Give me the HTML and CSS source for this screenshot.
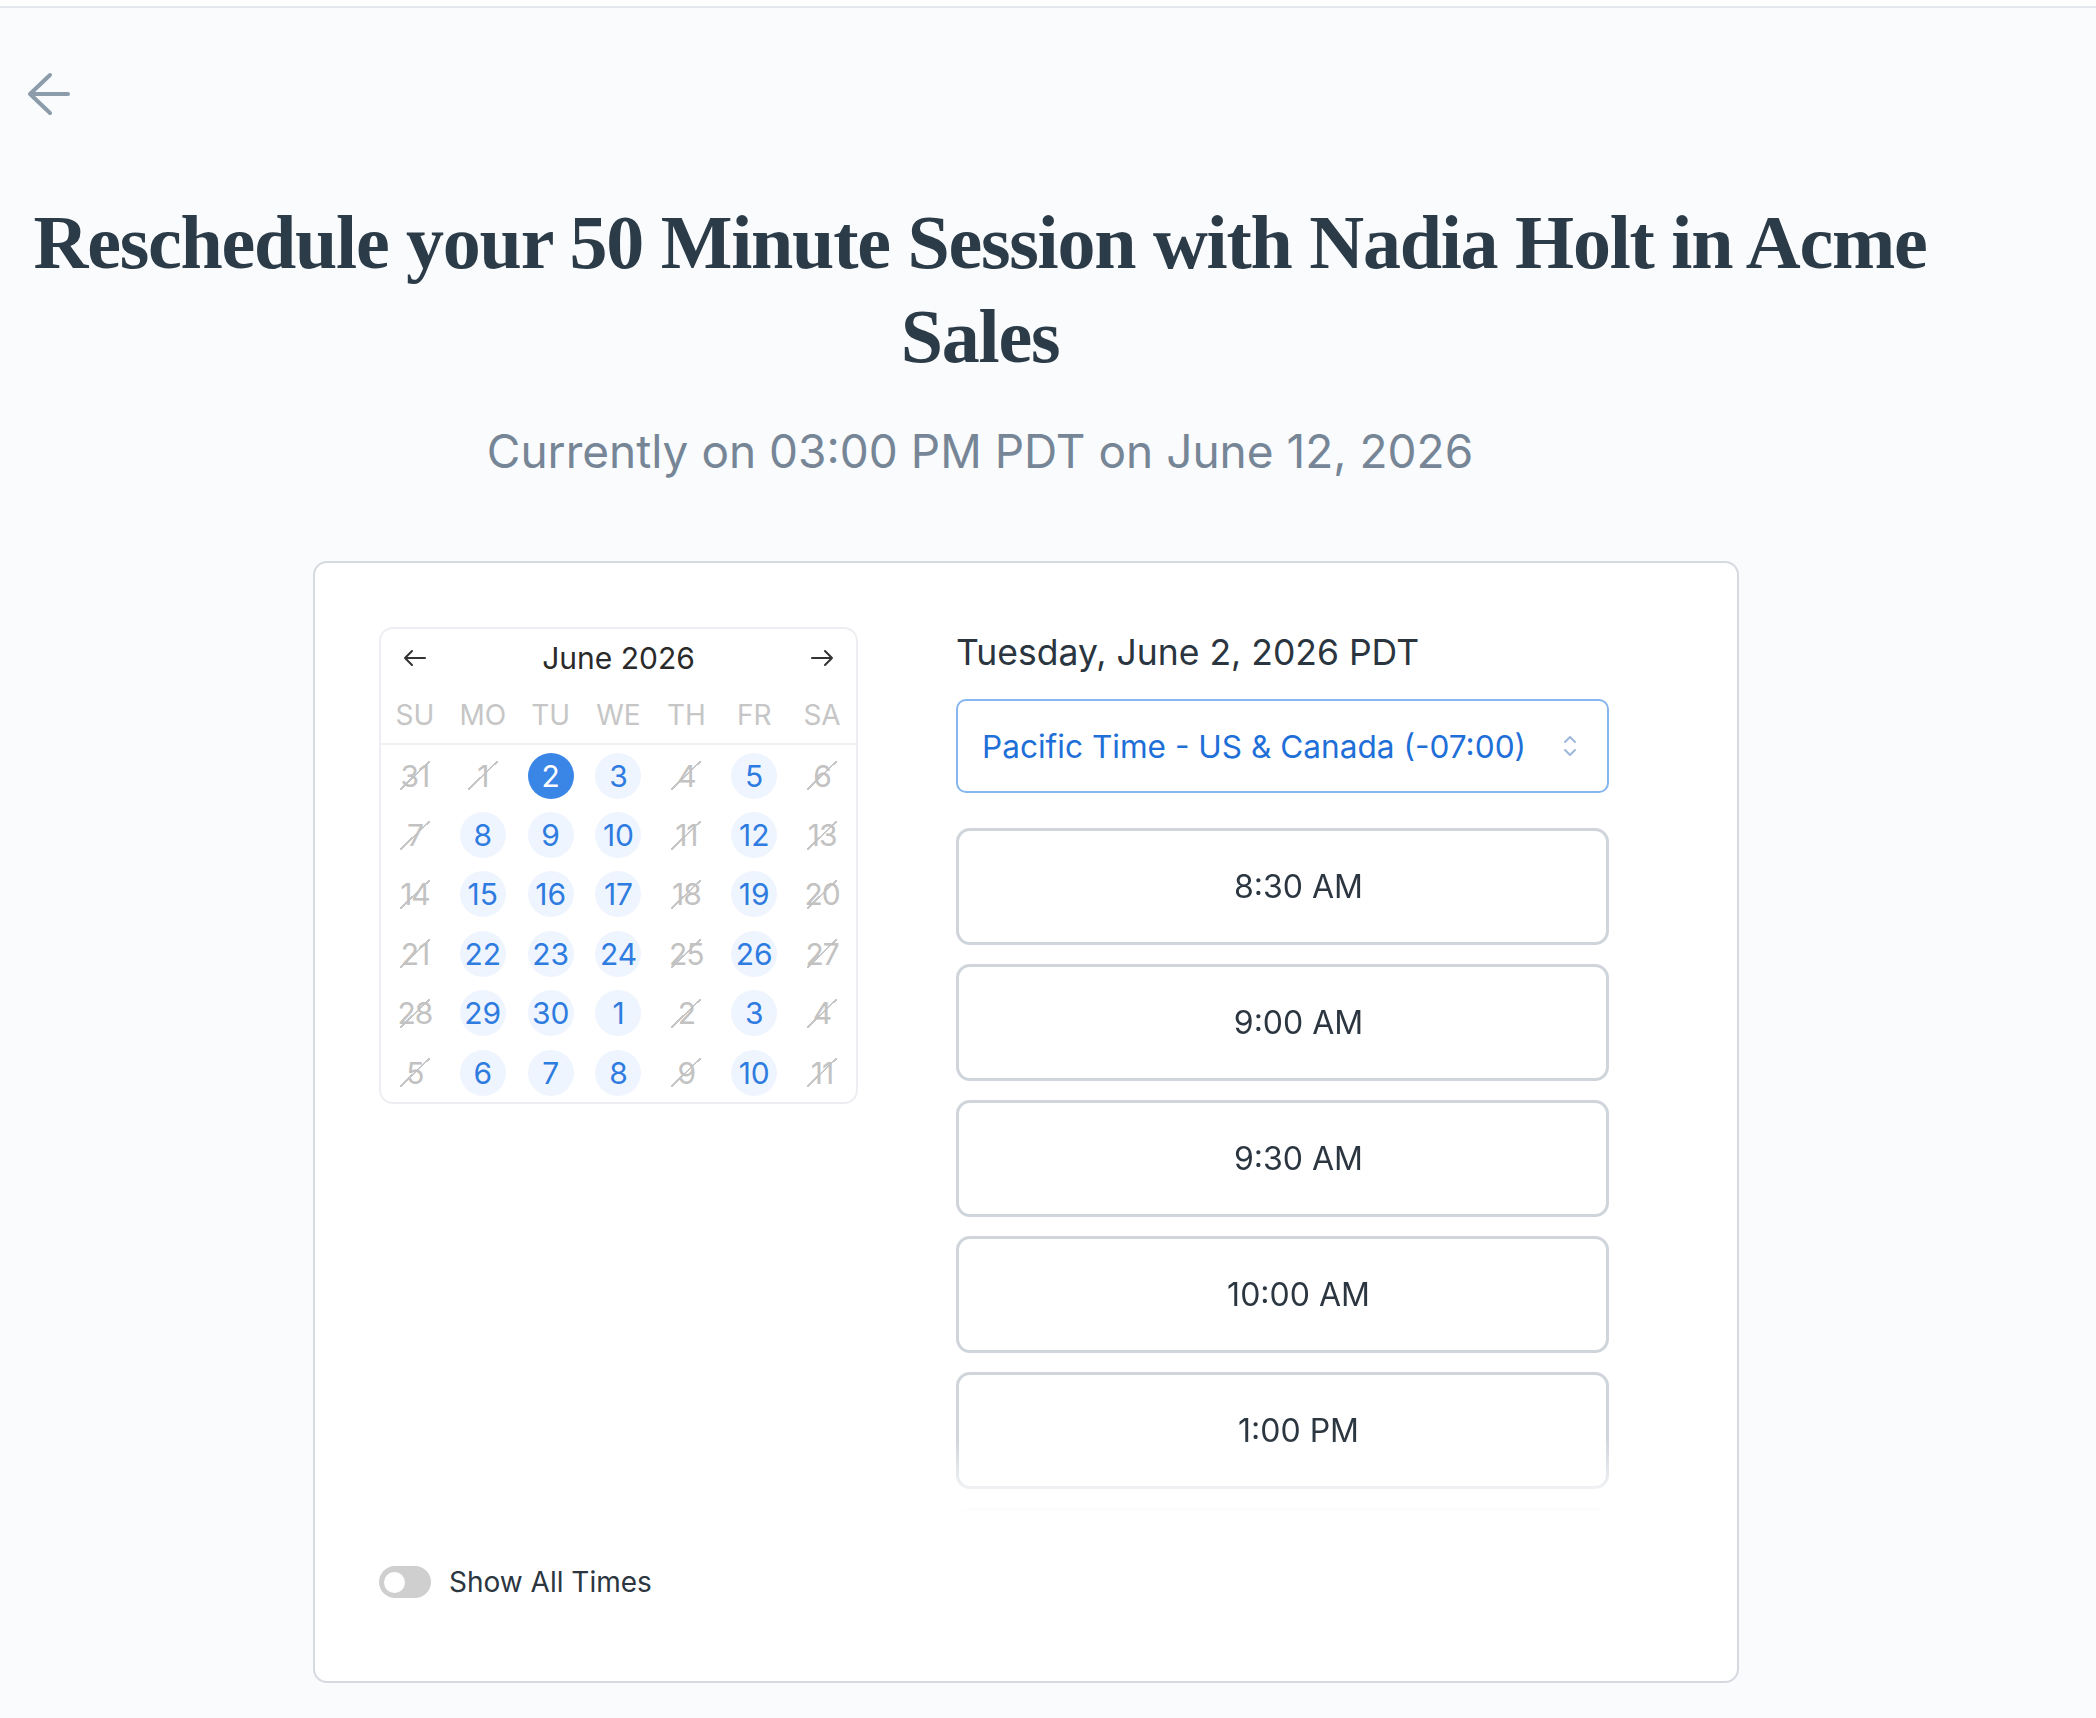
FILE: index.html
```html
<!DOCTYPE html>
<html lang="en">
<head>
<meta charset="utf-8">
<title>Reschedule</title>
<link rel="stylesheet" href="styles.css">
</head>
<body>
<div class="topbar"></div>
<div class="back-row">
  <a class="back" href="#" aria-label="Back">
    <svg width="44" height="44" viewBox="0 0 44 44" fill="none" stroke="#8c9cab" stroke-width="4" stroke-linecap="round" stroke-linejoin="round"><path d="M3 22H41M3 22L23 3M3 22L23 41"/></svg>
  </a>
</div>
<div class="header">
  <h1 class="title">Reschedule your 50 Minute Session with Nadia Holt in Acme Sales</h1>
  <p class="subtitle">Currently on 03:00 PM PDT on June 12, 2026</p>
</div>
<main class="card">
  <div class="top-row">
    <section class="calendar">
      <div class="cal-head">
        <span class="nav"><svg width="24" height="18" viewBox="0 0 24 18" fill="none" stroke="#333" stroke-width="2" stroke-linecap="round" stroke-linejoin="round"><path d="M2 9H22M2 9L9 2M2 9L9 16"/></svg></span>
        <span class="month">June 2026</span>
        <span class="nav"><svg width="24" height="18" viewBox="0 0 24 18" fill="none" stroke="#333" stroke-width="2" stroke-linecap="round" stroke-linejoin="round"><path d="M22 9H2M22 9L15 2M22 9L15 16"/></svg></span>
      </div>
      <div class="weekdays">
        <span>SU</span><span>MO</span><span>TU</span><span>WE</span><span>TH</span><span>FR</span><span>SA</span>
      </div>
      <div class="days">
        <span class="cell"><span class="off">31</span></span>
        <span class="cell"><span class="off">1</span></span>
        <span class="cell"><span class="on sel">2</span></span>
        <span class="cell"><span class="on">3</span></span>
        <span class="cell"><span class="off">4</span></span>
        <span class="cell"><span class="on">5</span></span>
        <span class="cell"><span class="off">6</span></span>

        <span class="cell"><span class="off">7</span></span>
        <span class="cell"><span class="on">8</span></span>
        <span class="cell"><span class="on">9</span></span>
        <span class="cell"><span class="on">10</span></span>
        <span class="cell"><span class="off">11</span></span>
        <span class="cell"><span class="on">12</span></span>
        <span class="cell"><span class="off">13</span></span>

        <span class="cell"><span class="off">14</span></span>
        <span class="cell"><span class="on">15</span></span>
        <span class="cell"><span class="on">16</span></span>
        <span class="cell"><span class="on">17</span></span>
        <span class="cell"><span class="off">18</span></span>
        <span class="cell"><span class="on">19</span></span>
        <span class="cell"><span class="off">20</span></span>

        <span class="cell"><span class="off">21</span></span>
        <span class="cell"><span class="on">22</span></span>
        <span class="cell"><span class="on">23</span></span>
        <span class="cell"><span class="on">24</span></span>
        <span class="cell"><span class="off">25</span></span>
        <span class="cell"><span class="on">26</span></span>
        <span class="cell"><span class="off">27</span></span>

        <span class="cell"><span class="off">28</span></span>
        <span class="cell"><span class="on">29</span></span>
        <span class="cell"><span class="on">30</span></span>
        <span class="cell"><span class="on">1</span></span>
        <span class="cell"><span class="off">2</span></span>
        <span class="cell"><span class="on">3</span></span>
        <span class="cell"><span class="off">4</span></span>

        <span class="cell"><span class="off">5</span></span>
        <span class="cell"><span class="on">6</span></span>
        <span class="cell"><span class="on">7</span></span>
        <span class="cell"><span class="on">8</span></span>
        <span class="cell"><span class="off">9</span></span>
        <span class="cell"><span class="on">10</span></span>
        <span class="cell"><span class="off">11</span></span>
      </div>
    </section>
    <section class="times">
      <div class="date">Tuesday, June 2, 2026 PDT</div>
      <div class="tz">
        <span>Pacific Time - US &amp; Canada (-07:00)</span>
        <svg width="16" height="26" viewBox="0 0 16 26" fill="none" stroke="#9db8db" stroke-width="2" stroke-linecap="round" stroke-linejoin="round"><path d="M3 9L8 4L13 9M3 17L8 22L13 17"/></svg>
      </div>
      <div class="slots">
        <button class="slot">8:30 AM</button>
        <button class="slot">9:00 AM</button>
        <button class="slot">9:30 AM</button>
        <button class="slot">10:00 AM</button>
        <button class="slot">1:00 PM</button>
        <button class="slot" aria-label="1:30 PM"></button>
      </div>
    </section>
  </div>
  <label class="toggle-row">
    <span class="toggle"><span class="knob"></span></span>
    <span class="toggle-label">Show All Times</span>
  </label>
</main>
</body>
</html>
```

FILE: styles.css
```css
* { box-sizing: border-box; }
html, body { margin: 0; padding: 0; }
body {
  background: #f9fbfd;
  font-family: Inter, "Noto Sans", "Liberation Sans", sans-serif;
  color: #2b3640;
  width: 2096px;
  min-height: 1718px;
}
.topbar {
  height: 8px;
  background: #ffffff;
  border-bottom: 2px solid #e4e7eb;
}
.back-row {
  padding-left: 27px;
  margin-top: 64px;
  height: 44px;
}
.back { display: block; width: 44px; height: 44px; }
.back svg { display: block; }
.header {
  margin-left: 24px;
  width: 1912px;
  text-align: center;
}
.title {
  margin: 79px 0 0;
  font-family: "Liberation Serif", "DejaVu Serif", serif;
  font-weight: 700;
  font-size: 76px;
  line-height: 94px;
  letter-spacing: -1.25px;
  color: #2c3b48;
}
.subtitle {
  margin: 39px 0 0;
  font-size: 46px;
  line-height: 58px;
  color: #768696;
  font-weight: 400;
}
.card {
  margin: 81px 0 0 313px;
  width: 1426px;
  background: #ffffff;
  border: 2px solid #d6dae0;
  border-radius: 14px;
  padding: 64px 64px 83px 64px;
}
.top-row {
  display: flex;
  align-items: flex-start;
  gap: 98px;
}
.calendar {
  width: 479px;
  border: 2px solid #eceef1;
  border-radius: 14px;
}
.cal-head {
  display: flex;
  align-items: center;
  height: 57px;
}
.nav {
  width: 68px;
  display: flex;
  justify-content: center;
  align-items: center;
}
.nav svg { display: block; }
.month {
  flex: 1;
  text-align: center;
  font-size: 30px;
  color: #2a2a2a;
}
.weekdays {
  display: grid;
  grid-template-columns: repeat(7, 1fr);
  height: 59px;
  align-items: center;
  border-bottom: 2px solid #eff1f3;
  font-size: 28px;
  color: #c6c6c6;
  text-align: center;
}
.days {
  display: grid;
  grid-template-columns: repeat(7, 1fr);
  grid-auto-rows: 59.4px;
  padding-top: 1px;
}
.cell {
  display: flex;
  align-items: center;
  justify-content: center;
}
.on {
  width: 46px;
  height: 46px;
  border-radius: 50%;
  background: #eff5fe;
  color: #2f7ce0;
  font-size: 30px;
  display: flex;
  align-items: center;
  justify-content: center;
}
.on.sel {
  background: #3a86e7;
  color: #ffffff;
}
.off {
  width: 30px;
  height: 29px;
  font-size: 30px;
  color: #c2c2c2;
  display: flex;
  align-items: center;
  justify-content: center;
  letter-spacing: -1px;
  background: linear-gradient(to bottom right, transparent calc(50% - 1px), #c6c6c6 calc(50% - 1px), #c6c6c6 calc(50% + 0.8px), transparent calc(50% + 0.8px));
}
.times {
  width: 653px;
}
.date {
  font-size: 35.5px;
  line-height: 52px;
  color: #2a3540;
}
.tz {
  margin-top: 20px;
  height: 94px;
  border: 2px solid #86b6ef;
  border-radius: 10px;
  display: flex;
  align-items: center;
  justify-content: space-between;
  padding: 0 29px 0 24px;
  font-size: 31.6px;
  color: #1f6fd8;
}
.tz svg { display: block; }
.slots {
  margin-top: 35px;
  height: 692px;
  overflow: hidden;
  display: flex;
  flex-direction: column;
  gap: 19px;
  -webkit-mask-image: linear-gradient(to bottom, #000 calc(100% - 82px), transparent calc(100% - 6px));
  mask-image: linear-gradient(to bottom, #000 calc(100% - 82px), transparent calc(100% - 6px));
}
.slot {
  flex: none;
  height: 117px;
  width: 100%;
  border: 3px solid #d0d5dc;
  border-radius: 14px;
  background: #ffffff;
  font-family: Inter, "Noto Sans", "Liberation Sans", sans-serif;
  font-size: 32px;
  color: #2b3640;
  padding: 0 0 0 32px;
  text-align: center;
}
.toggle-row {
  margin-top: 46px;
  display: flex;
  align-items: center;
  gap: 18px;
  height: 32px;
}
.toggle {
  width: 52px;
  height: 32px;
  border-radius: 16px;
  background: #cfcfcf;
  display: flex;
  align-items: center;
  padding-left: 5px;
}
.knob {
  width: 21px;
  height: 21px;
  border-radius: 50%;
  background: #ffffff;
}
.toggle-label {
  font-size: 28px;
  color: #2b3640;
}
```
